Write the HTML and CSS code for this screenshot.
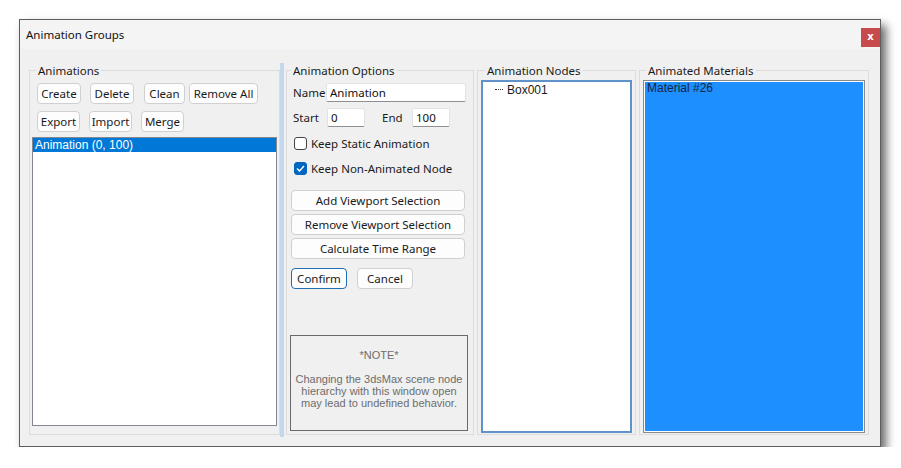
FILE: index.html
```html
<!DOCTYPE html>
<html lang="en">
<head>
    <meta charset="UTF-8">
    <title>Animation Groups</title>
    <link rel="stylesheet" href="styles.css">
</head>
<body>
    <div class="window">
        <div class="titlebar">
            <span class="title">Animation Groups</span>
            <span class="close">x</span>
        </div>

        <div class="content">
            <!-- Animations list -->
            <fieldset class="group group-anims">
                <legend>Animations</legend>
                <div class="btn-row">
                    <button class="btn w44">Create</button>
                    <button class="btn w44">Delete</button>
                    <button class="btn w41 gap10">Clean</button>
                    <button class="btn w69 gap4">Remove All</button>
                </div>
                <div class="btn-row row2">
                    <button class="btn w43">Export</button>
                    <button class="btn w43">Import</button>
                    <button class="btn w43">Merge</button>
                </div>
                <div class="listbox">
                    <div class="list-item selected">Animation (0, 100)</div>
                </div>
            </fieldset>

            <div class="splitter"></div>

            <!-- Options -->
            <fieldset class="group group-opts">
                <legend>Animation Options</legend>
                <div class="field-row">
                    <label class="lbl lbl-name">Name</label>
                    <input class="textbox tb-name" type="text" value="Animation">
                </div>
                <div class="field-row row-range">
                    <label class="lbl lbl-start">Start</label>
                    <input class="textbox tb-num" type="text" value="0">
                    <label class="lbl lbl-end">End</label>
                    <input class="textbox tb-num" type="text" value="100">
                </div>
                <div class="check-row">
                    <span class="check"></span>
                    <span>Keep Static Animation</span>
                </div>
                <div class="check-row">
                    <span class="check checked">
                        <svg width="11" height="11" viewBox="0 0 11 11"><polyline points="2,5.5 4.5,8 9,3" fill="none" stroke="#fff" stroke-width="1.4"/></svg>
                    </span>
                    <span>Keep Non-Animated Node</span>
                </div>
                <div class="wide-btns">
                    <button class="btn wide">Add Viewport Selection</button>
                    <button class="btn wide">Remove Viewport Selection</button>
                    <button class="btn wide">Calculate Time Range</button>
                </div>
                <div class="btn-row confirm-row">
                    <button class="btn btn-default w56">Confirm</button>
                    <button class="btn w56">Cancel</button>
                </div>
                <div class="note">
                    <p class="note-title">*NOTE*</p>
                    <p>Changing the 3dsMax scene node hierarchy with this window open may lead to undefined behavior.</p>
                </div>
            </fieldset>

            <!-- Nodes tree -->
            <fieldset class="group group-nodes">
                <legend>Animation Nodes</legend>
                <div class="tree">
                    <div class="tree-item"><span class="dots"></span>Box001</div>
                </div>
            </fieldset>

            <!-- Materials -->
            <fieldset class="group group-mats">
                <legend>Animated Materials</legend>
                <div class="matlist">
                    <div class="mat-item">Material #26</div>
                </div>
            </fieldset>
        </div>
    </div>
</body>
</html>
```

FILE: styles.css
```css
body {
    margin: 0;
    background: #fff;
    font-family: "Noto Sans", "Liberation Sans", sans-serif;
    font-size: 11.5px;
    color: #1a1a1a;
}
.window {
    margin: 19px 0 0 19px;
    width: 860px;
    height: 426px;
    border: 1px solid #5e5e5e;
    background: #f0f0f0;
    box-shadow: 5px 6px 9px rgba(0, 0, 0, 0.6);
    display: flex;
    flex-direction: column;
}
.titlebar {
    height: 29px;
    background: #f3f4f3;
    display: flex;
    align-items: flex-start;
    justify-content: space-between;
}
.title {
    margin: 7px 0 0 6px;
    font-size: 11.5px;
    color: #111;
}
.close {
    margin-top: 8px;
    width: 19px;
    height: 19px;
    background: #c84b4b;
    color: #fff;
    font-family: "DejaVu Sans", sans-serif;
    font-weight: bold;
    font-size: 10px;
    line-height: 17px;
    text-align: center;
}
.content {
    display: flex;
    padding: 14px 0 0 9px;
    height: 384px;
}
.group {
    box-sizing: border-box;
    margin: 0;
    height: 372px;
    border: 1px solid #dcdcdc;
    padding: 0 2px 0 2px;
    min-width: 0;
}
.group legend {
    padding: 0 2px;
    margin-left: 4px;
    line-height: 15px;
    color: #1a1a1a;
}
.group-anims {
    width: 251px;
    padding-bottom: 8px;
    display: flex;
    flex-direction: column;
}
.splitter {
    width: 4px;
    height: 374px;
    background: #c3d8ef;
    margin-right: 2px;
}
.group-opts {
    width: 188px;
    padding: 5px 7px 0 4px;
    margin-right: 3px;
}
.group-opts legend {
    margin-left: 0;
}
.group-nodes {
    width: 159px;
    padding: 2px 3px 1px 3px;
    margin-right: 3px;
}
.group-nodes legend {
    margin-left: 4px;
}
.group-mats legend {
    margin-left: 3px;
}
.group-mats {
    width: 230px;
    padding: 2px 3px 1px 3px;
}

/* buttons */
.btn {
    box-sizing: border-box;
    height: 21px;
    margin: 0;
    padding: 0;
    border: 1px solid #d0d0d0;
    border-radius: 4px;
    background: #fdfdfd;
    font-family: inherit;
    font-size: 11.5px;
    color: #1a1a1a;
}
.btn-row {
    display: flex;
    gap: 9px;
    padding-left: 5px;
    margin-top: 5px;
}
.btn-row.row2 {
    margin-top: 7px;
}
.w41 { width: 41px; }
.w43 { width: 43px; }
.w44 { width: 44px; }
.w56 { width: 56px; }
.w69 { width: 69px; }
.gap10 { margin-left: 1px; }
.gap4 { margin-left: -5px; }
.listbox {
    margin-top: 5px;
    flex: 1;
    background: #fff;
    border: 1px solid #828790;
    font-family: "Liberation Sans", sans-serif;
    font-size: 12px;
}
.list-item {
    height: 14px;
    line-height: 14px;
    padding-left: 2px;
}
.list-item.selected {
    background: #0078d7;
    color: #fff;
}

/* options */
.field-row {
    display: flex;
    align-items: center;
    height: 19px;
}
.row-range {
    margin-top: 6px;
}
.lbl {
    margin-left: 2px;
}
.lbl-name { width: 34px; }
.lbl-start { width: 34px; }
.lbl-end {
    margin-left: 17px;
    width: 30px;
}
.textbox {
    box-sizing: border-box;
    height: 19px;
    border: 1px solid #e2e2e2;
    border-bottom-color: #8f8f8f;
    border-radius: 2px;
    background: #fff;
    padding: 0 3px;
    font-family: inherit;
    font-size: 11.5px;
    color: #111;
    outline: none;
}
.tb-name { width: 140px; }
.tb-num { width: 38px; }
.check-row {
    display: flex;
    align-items: center;
    gap: 4px;
    margin-top: 10px;
    margin-left: 3px;
    height: 13px;
}
.check-row + .check-row {
    margin-top: 12px;
}
.check {
    box-sizing: border-box;
    width: 13px;
    height: 13px;
    border: 1px solid #444;
    border-radius: 3px;
    background: #fff;
    display: flex;
    align-items: center;
    justify-content: center;
}
.check.checked {
    background: #0067c0;
    border-color: #0067c0;
}
.wide-btns {
    display: flex;
    flex-direction: column;
    gap: 3px;
    margin-top: 15px;
}
.btn.wide {
    width: 174px;
}
.confirm-row {
    padding-left: 0;
    gap: 10px;
    margin-top: 9px;
}
.btn-default {
    border-color: #1f6fb5;
}
.note {
    box-sizing: border-box;
    width: 178px;
    height: 96px;
    margin: 46px 0 0 -1px;
    border: 1px solid #6a6a6a;
    text-align: center;
    color: #6d6d6d;
    font-family: "Liberation Sans", sans-serif;
    font-size: 11px;
    line-height: 12px;
}
.note p {
    margin: 0;
    padding: 0 3px;
}
.note-title {
    margin-top: 13px !important;
    margin-bottom: 12px !important;
}

/* nodes */
.tree {
    box-sizing: border-box;
    height: 353px;
    background: #fff;
    border: 2px solid #5f92c9;
    padding-top: 1px;
    font-family: "Liberation Sans", sans-serif;
    font-size: 12px;
}
.tree-item {
    display: flex;
    align-items: center;
    padding-left: 12px;
    height: 14px;
}
.dots {
    width: 8px;
    border-top: 1px dotted #333;
    margin-right: 4px;
}

/* materials */
.matlist {
    box-sizing: border-box;
    height: 353px;
    background: #1e8fff;
    border: 1px solid #8a8a8a;
    box-shadow: inset 0 0 0 1px #fff;
    padding: 0 3px;
    font-family: "Liberation Sans", sans-serif;
    font-size: 12px;
    color: #14263f;
}
```
